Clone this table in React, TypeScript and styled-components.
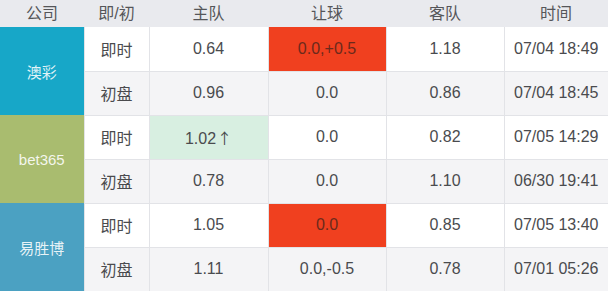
import React from "react";
import styled, { createGlobalStyle } from "styled-components";

const GlobalStyle = createGlobalStyle`
  html, body {
    margin: 0;
    padding: 0;
    background: #ffffff;
  }
  body {
    font-family: "Liberation Sans", "Noto Sans CJK SC", sans-serif;
  }
`;

const colors = {
  head: "#e9eaee",
  line: "#e2e3e7",
  even: "#f4f4f6",
  text: "#4a4b4e",
  headText: "#555659",
  red: "#f0401f",
  green: "#d8efe1",
};

const Table = styled.table`
  width: 608px;
  border-collapse: collapse;
  table-layout: fixed;
`;

const HeadCell = styled.th<{ $w: number }>`
  width: ${({ $w }) => $w}px;
  height: 27px;
  padding: 0;
  background: ${colors.head};
  color: ${colors.headText};
  font-size: 16px;
  font-weight: normal;
  text-align: center;
  line-height: 27px;
`;

const CompanyCell = styled.td<{ $bg: string }>`
  padding: 0;
  background: ${({ $bg }) => $bg};
  color: rgba(255, 255, 255, 0.88);
  font-size: 15px;
  text-align: center;
  vertical-align: middle;
`;

const Row = styled.tr<{ $alt: boolean }>`
  height: 44px;
  background: ${({ $alt }) => ($alt ? colors.even : "#ffffff")};
`;

const Cell = styled.td<{ $tone?: "red" | "green" }>`
  padding: 0;
  height: 43px;
  border-left: 1px solid ${colors.line};
  border-bottom: 1px solid ${colors.line};
  color: ${({ $tone }) => ($tone === "red" ? "#6b2a1c" : colors.text)};
  background: ${({ $tone }) =>
    $tone === "red" ? colors.red : $tone === "green" ? colors.green : "transparent"};
  font-size: 16px;
  text-align: center;
  vertical-align: middle;
`;

const Arrow = styled.span`
  font-family: "Noto Sans CJK SC", sans-serif;
  font-size: 15px;
  margin-left: 1px;
`;

type Line = {
  kind: string;
  home: string;
  up?: boolean;
  handicap: string;
  away: string;
  time: string;
  homeTone?: "red" | "green";
  hcTone?: "red" | "green";
};

type Company = { name: string; color: string; lines: Line[] };

const data: Company[] = [
  {
    name: "澳彩",
    color: "#17a7c8",
    lines: [
      { kind: "即时", home: "0.64", handicap: "0.0,+0.5", away: "1.18", time: "07/04 18:49", hcTone: "red" },
      { kind: "初盘", home: "0.96", handicap: "0.0", away: "0.86", time: "07/04 18:45" },
    ],
  },
  {
    name: "bet365",
    color: "#a9bc6f",
    lines: [
      { kind: "即时", home: "1.02", up: true, handicap: "0.0", away: "0.82", time: "07/05 14:29", homeTone: "green" },
      { kind: "初盘", home: "0.78", handicap: "0.0", away: "1.10", time: "06/30 19:41" },
    ],
  },
  {
    name: "易胜博",
    color: "#4ba1c2",
    lines: [
      { kind: "即时", home: "1.05", handicap: "0.0", away: "0.85", time: "07/05 13:40", hcTone: "red" },
      { kind: "初盘", home: "1.11", handicap: "0.0,-0.5", away: "0.78", time: "07/01 05:26" },
    ],
  },
];

const heads: [string, number][] = [
  ["公司", 84],
  ["即/初", 65],
  ["主队", 119],
  ["让球", 118],
  ["客队", 118],
  ["时间", 104],
];

export default function App() {
  return (
    <>
      <GlobalStyle />
      <Table>
        <thead>
          <tr>
            {heads.map(([label, w]) => (
              <HeadCell key={label} $w={w}>
                {label}
              </HeadCell>
            ))}
          </tr>
        </thead>
        <tbody>
          {data.map((c) =>
            c.lines.map((l, i) => (
              <Row key={c.name + l.kind} $alt={i === 1}>
                {i === 0 && (
                  <CompanyCell rowSpan={2} $bg={c.color}>
                    {c.name}
                  </CompanyCell>
                )}
                <Cell>{l.kind}</Cell>
                <Cell $tone={l.homeTone}>
                  {l.home}
                  {l.up && <Arrow>↑</Arrow>}
                </Cell>
                <Cell $tone={l.hcTone}>{l.handicap}</Cell>
                <Cell>{l.away}</Cell>
                <Cell>{l.time}</Cell>
              </Row>
            ))
          )}
        </tbody>
      </Table>
    </>
  );
}
